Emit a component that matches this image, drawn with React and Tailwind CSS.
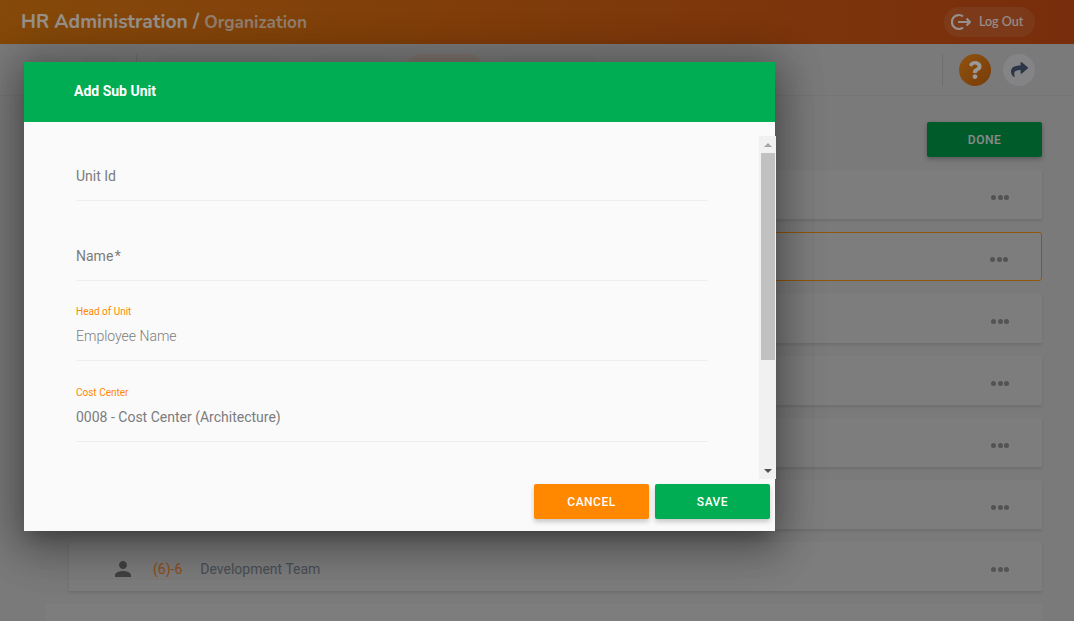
import React from "react";
import { FaShare, FaQuestion } from "react-icons/fa";
import { MdPerson } from "react-icons/md";

function Dots() {
  return (
    <div className="flex gap-[1.5px] mt-[1px]">
      <span className="w-[5px] h-[5px] rounded-full bg-[#8a8a8e]" />
      <span className="w-[5px] h-[5px] rounded-full bg-[#8a8a8e]" />
      <span className="w-[5px] h-[5px] rounded-full bg-[#8a8a8e]" />
    </div>
  );
}

function Row({ selected, children }) {
  return (
    <div
      className={
        "h-[49px] shrink-0 ml-[24px] flex items-center justify-between pr-[33px] pt-[5px] bg-[#d0d0d0] " +
        (selected
          ? "border border-[#f09010] rounded-[3px]"
          : "shadow-[0_2px_3px_rgba(0,0,0,0.1)]")
      }
    >
      <div className="flex items-center">{children}</div>
      <Dots />
    </div>
  );
}

function Field({ label, value, light, tall, star }) {
  return (
    <div
      className={
        "border-b border-[#eeeeee] flex flex-col justify-end pb-[14px] " +
        (tall ? "h-[81px]" : "h-[80px]")
      }
    >
      {label ? (
        <div className="text-[10px] leading-[12px] text-[#ff8800] mb-[8px]">{label}</div>
      ) : null}
      <div className={"text-[14px] leading-[20px] text-[#7c7c7c] " + (light ? "font-light" : "")}>
        {value}
        {star ? <span className="ml-[1.5px]">*</span> : null}
      </div>
    </div>
  );
}

export default function App() {
  return (
    <div className="relative h-[621px] w-[1074px] overflow-hidden bg-[#cccccc] font-['Roboto',sans-serif]">
      <header className="h-[44px] flex items-center justify-between pl-[21px] pr-[39px] bg-gradient-to-r from-[#de7a10] to-[#c94c14]">
        <div className="flex items-baseline font-['Nunito','Lato',sans-serif] text-white/90">
          <span className="text-[19.3px] font-bold">HR Administration /</span>
          <span className="text-[17.2px] font-bold text-white/70 ml-[5px]">Organization</span>
        </div>
        <div className="h-[30px] w-[91px] rounded-full bg-white/10 flex items-center pl-[7px] text-white/90">
          <svg width="20" height="20" viewBox="0 0 20 20" fill="none" stroke="currentColor" strokeWidth="2.2">
            <path d="M12 4.3 A7 7 0 1 0 12 15.7" />
            <path d="M7 10 H19 M15.5 6.5 L19 10 L15.5 13.5" />
          </svg>
          <span className="ml-[8px] text-[12.5px] font-['Lato',sans-serif] font-medium">Log Out</span>
        </div>
      </header>

      <div className="h-[52px] flex items-center pl-[22px] pr-[39px] border-b border-[#c4c4c4]">
        <div className="w-[40px] h-[32px] rounded-full bg-[#c8c8c8] flex items-center justify-center">
          <div className="w-[3px] h-[16px] rounded-full bg-[#555555]" />
        </div>
        <div className="w-[44px] h-[32px] rounded-full bg-[#c8c8c8] ml-[16px]" />
        <div className="w-px h-[32px] bg-[#bababa] ml-[14px]" />
        <div className="w-[132px] h-[32px] rounded-full bg-[#c8c8c8] ml-[16px]" />
        <div className="w-[83px] h-[32px] rounded-full bg-[#c8c8c8] ml-[22px]" />
        <div className="w-[79px] h-[32px] rounded-full bg-[#d0c0b6] ml-[15px]" />
        <div className="w-[100px] h-[32px] rounded-full bg-[#c8c8c8] ml-[16px]" />
        <div className="flex-1" />
        <div className="w-px h-[32px] bg-[#bababa]" />
        <div className="w-[32px] h-[32px] rounded-full bg-gradient-to-br from-[#f08a1a] to-[#c8650f] ml-[16px] flex items-center justify-center text-white">
          <FaQuestion size={18} />
        </div>
        <div className="w-[32px] h-[32px] rounded-full bg-[#dcdde0] ml-[12px] flex items-center justify-center text-[#4a5a78]">
          <FaShare size={17} />
        </div>
      </div>

      <main className="pl-[45px] pr-[32px] pt-[26px]">
        <div className="flex justify-end mb-[13px]">
          <div className="w-[115px] h-[35px] rounded-[2px] bg-[#009848] flex items-center justify-center text-[12px] font-medium tracking-[0.5px] text-[#e8e8e8] shadow-[0_2px_5px_rgba(0,0,0,0.3)]">
            DONE
          </div>
        </div>
        <div className="flex flex-col gap-[13px]">
          <Row />
          <Row selected />
          <Row />
          <Row />
          <Row />
          <Row />
          <Row>
            <MdPerson size={24} className="text-[#6f6f6f] ml-[42px]" />
            <span className="text-[14px] text-[#f08030] ml-[18px]">(6)-6</span>
            <span className="text-[14px] text-[#7c8590] ml-[18px]">Development Team</span>
          </Row>
          <div className="h-[49px] shrink-0 bg-[#d0d0d0]" />
        </div>
      </main>

      <div className="absolute inset-0 bg-black/40 pl-[24px] pt-[62px]">
        <div className="w-[751px] h-[469px] flex flex-col bg-[#fafafa] shadow-[0_11px_15px_-7px_rgba(0,0,0,0.2),0_24px_38px_3px_rgba(0,0,0,0.14),0_9px_46px_8px_rgba(0,0,0,0.12),0_0_40px_6px_rgba(0,0,0,0.22)]">
          <div className="h-[60px] shrink-0 bg-[#00ad53] flex items-center pl-[50px] pb-[2px] text-[14px] font-bold text-white">
            Add Sub Unit
          </div>
          <div className="flex-1 flex min-h-0">
            <div className="w-[735px] pl-[52px] pr-[51px] -mt-[1px]">
              <Field value="Unit Id" />
              <Field value="Name" star />
              <Field label="Head of Unit" value="Employee Name" light />
              <Field label="Cost Center" value="0008 - Cost Center (Architecture)" tall />
            </div>
            <div className="w-[17px] -mr-px mt-[14px] bg-[#f1f1f1] flex flex-col items-center relative z-10">
              <div className="h-[17px] flex items-center justify-center w-full">
                <div className="w-0 h-0 border-x-[4px] border-x-transparent border-b-[4px] border-b-[#a3a3a3]" />
              </div>
              <div className="w-[14px] h-[207px] bg-[#c1c1c1] ml-[1px]" />
              <div className="flex-1" />
              <div className="h-[17px] flex items-center justify-center w-full">
                <div className="w-0 h-0 border-x-[4px] border-x-transparent border-t-[4px] border-t-[#505050]" />
              </div>
            </div>
          </div>
          <div className="h-[52px] shrink-0 flex justify-end gap-[6px] pt-[5px] pr-[5px]">
            <div className="w-[115px] h-[35px] rounded-[2px] bg-[#ff8800] flex items-center justify-center text-[12px] font-medium tracking-[0.5px] text-white shadow-[0_3px_5px_rgba(0,0,0,0.2)]">
              CANCEL
            </div>
            <div className="w-[115px] h-[35px] rounded-[2px] bg-[#00ad53] flex items-center justify-center text-[12px] font-medium tracking-[0.5px] text-white shadow-[0_3px_5px_rgba(0,0,0,0.2)]">
              SAVE
            </div>
          </div>
        </div>
      </div>
    </div>
  );
}
